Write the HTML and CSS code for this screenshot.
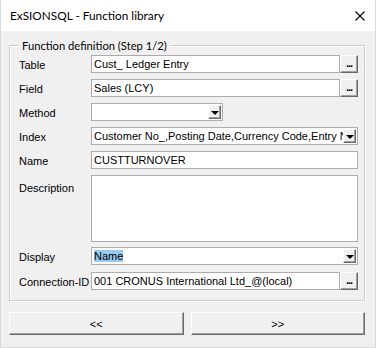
FILE: index.html
```html
<!DOCTYPE html>
<html lang="en">
<head>
    <meta charset="UTF-8">
    <title>ExSIONSQL - Function library</title>
    <link rel="stylesheet" href="styles.css">
</head>
<body>
<div class="window">
    <div class="titlebar">
        <span class="title">ExSIONSQL - Function library</span>
        <span class="close">
            <svg width="10" height="10" viewBox="0 0 10 10"><path d="M0.5 0.5L9.5 9.5M9.5 0.5L0.5 9.5" stroke="#000" stroke-width="1.1" fill="none"/></svg>
        </span>
    </div>
    <div class="main">
        <fieldset class="group">
            <legend>Function definition (Step 1/2)</legend>
            <div class="row">
                <label>Table</label>
                <div class="input">Cust_ Ledger Entry</div>
                <span class="btn dots">...</span>
            </div>
            <div class="row">
                <label>Field</label>
                <div class="input">Sales (LCY)</div>
                <span class="btn dots">...</span>
            </div>
            <div class="row">
                <label>Method</label>
                <div class="combo short">
                    <span class="value"></span>
                    <span class="btn arrow"></span>
                </div>
            </div>
            <div class="row">
                <label>Index</label>
                <div class="combo">
                    <span class="value">Customer No_,Posting Date,Currency Code,Entry No_</span>
                    <span class="btn arrow"></span>
                </div>
            </div>
            <div class="row">
                <label>Name</label>
                <div class="input">CUSTTURNOVER</div>
            </div>
            <div class="row tall">
                <label>Description</label>
                <div class="input memo"></div>
            </div>
            <div class="row display">
                <label>Display</label>
                <div class="combo">
                    <span class="value"><span class="selected">Name</span></span>
                    <span class="btn arrow"></span>
                </div>
            </div>
            <div class="row conn">
                <label>Connection-ID</label>
                <div class="input">001 CRONUS International Ltd_@(local)</div>
                <span class="btn dots">...</span>
            </div>
        </fieldset>
        <div class="nav">
            <button>&lt;&lt;</button>
            <button>&gt;&gt;</button>
        </div>
    </div>
</div>
</body>
</html>
```

FILE: styles.css
```css
* {
    margin: 0;
    padding: 0;
    box-sizing: border-box;
}

body {
    background-color: #fff;
    font-family: "Liberation Sans", Arial, sans-serif;
    font-size: 11px;
    color: #000;
}

.window {width: 376px;height: 348px;background: #f0f0f0;border: 1px solid #d9d9d9;border-top: none;}

.titlebar {height: 31px;background: #fff;display: flex;align-items: center;justify-content: space-between;padding: 0 10px 0 9px;}

.titlebar .title {font-family: Lato, "Open Sans", sans-serif;font-size: 11.8px;}

.titlebar .close {display: flex;margin-top: 1px;}

.main {padding: 7px 10px 0 8px;}

.group {min-width: 0;border: 1px solid #cdcdcd;box-shadow: 1px 1px 0 #fff, inset 1px 1px 0 #fff;padding: 2px 6px 10px 9px;}

.group legend {padding: 0 3px;font-family: Lato, "Open Sans", sans-serif;font-size: 11.2px;line-height: 15px;}

.row {display: flex;height: 18px;margin-top: 6px;}

.row:first-of-type {margin-top: 0;}

.row label {width: 72px;flex: none;padding-top: 4px;}

.row.tall {height: 67px;}

.row.tall label {padding-top: 7px;}

.row.display {margin-top: 5px;}

.row.conn {margin-top: 7px;}

.input {flex: 1;min-width: 0;background: #fff;border: 1px solid #acacac;padding: 2px 2px 0 2px;white-space: nowrap;overflow: hidden;}

.btn {flex: none;display: flex;align-items: center;justify-content: center;background: #f0f0f0;border-top: 1px solid #fff;border-left: 1px solid #fff;border-right: 1px solid #696969;border-bottom: 1px solid #696969;box-shadow: inset -1px -1px 0 #a0a0a0;}

.btn.dots {width: 18px;font-weight: bold;font-size: 11px;line-height: 1;align-items: flex-end;padding-bottom: 3px;letter-spacing: -1px;}

.combo {flex: 1;min-width: 0;display: flex;background: #fff;border: 1px solid #acacac;padding: 1px;}

.combo.short {flex: none;width: 132px;}

.combo .value {flex: 1;min-width: 0;padding: 1px 1px 0 1px;white-space: nowrap;overflow: hidden;}

.combo .selected {background: #99c9ef;}

.btn.arrow {width: 13px;}

.btn.arrow:after {content: "";border-left: 4px solid transparent;border-right: 4px solid transparent;border-top: 4px solid #000;margin-top: 1px;}

.nav {display: flex;gap: 7px;margin-top: 11px;}

.nav button {flex: 1;height: 23px;background: #f0f0f0;font-family: "Liberation Sans", Arial, sans-serif;font-size: 11px;border-top: 1px solid #fff;border-left: 1px solid #fff;border-right: 1px solid #696969;border-bottom: 1px solid #696969;box-shadow: inset -1px -1px 0 #a0a0a0;}
```
